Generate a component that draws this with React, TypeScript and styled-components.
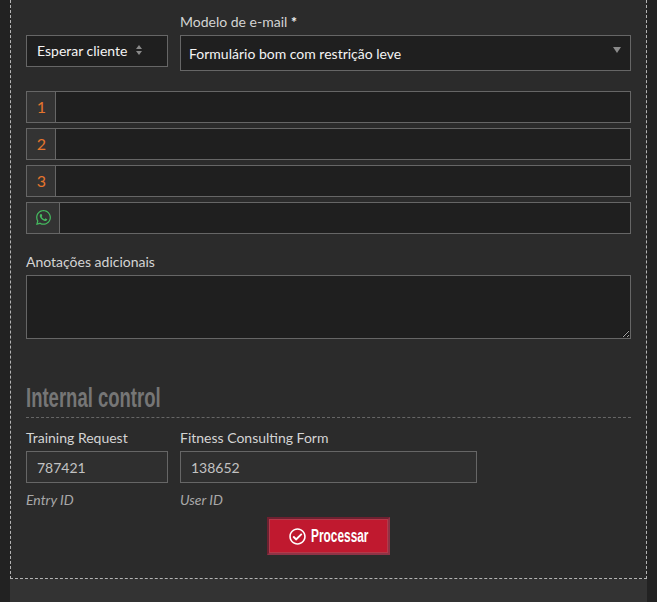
import React from "react";
import styled, { createGlobalStyle } from "styled-components";
import { FaWhatsapp, FaRegCheckCircle } from "react-icons/fa";

const Global = createGlobalStyle`
  html, body { margin: 0; padding: 0; background: #222222; height: 602px; overflow: hidden; }
  * { box-sizing: border-box; }
`;

const Page = styled.div`
  width: 657px;
  height: 602px;
  padding: 0 10px;
  background: #222222;
  font-family: Lato, "Liberation Sans", sans-serif;
  display: flex;
  flex-direction: column;
`;

const Panel = styled.main`
  height: 579px;
  background: #2b2b2b;
  border: 1px dashed #b5b5b5;
  border-top: 0;
  padding: 0 15px;
  display: flex;
  flex-direction: column;
`;

const Footer = styled.div`
  flex: 1;
  background: #333333;
`;

const TopRow = styled.div`
  display: grid;
  grid-template-columns: 142px 451px;
  column-gap: 12px;
  align-items: start;
  padding-top: 13px;
`;

const Field = styled.div`
  display: flex;
  flex-direction: column;
`;

const Label = styled.label`
  display: block;
  height: 22px;
  font-size: 14px;
  line-height: 17px;
  color: #d4d4d4;
`;

const Req = styled.b`
  color: #f0f0f0;
  font-weight: 900;
`;

const SmallSelect = styled.div`
  height: 32px;
  margin-top: 22px;
  border: 1px solid #666;
  background: #1f1f1f;
  color: #f4f4f4;
  font-size: 14px;
  padding: 0 0 2px 10px;
  display: flex;
  align-items: center;
  gap: 8px;
`;

const BigSelect = styled.div`
  position: relative;
  height: 36px;
  border: 1px solid #666;
  background: #1f1f1f;
  color: #f4f4f4;
  font-size: 14px;
  padding: 1px 8px 0;
  display: flex;
  align-items: center;
`;

const Caret = styled.svg`
  position: absolute;
  right: 9px;
  top: 11px;
`;

const Rows = styled.div`
  margin-top: 20px;
  display: flex;
  flex-direction: column;
  gap: 5px;
`;

const InputRow = styled.div`
  height: 32px;
  display: flex;
  border: 1px solid #666;
  background: #1f1f1f;
`;

const Addon = styled.span<{ $wide?: boolean; $green?: boolean }>`
  flex: none;
  width: ${(p) => (p.$wide ? "33px" : "29px")};
  background: #333333;
  border-right: 1px solid #666;
  padding: 0 0 1px 1px;
  display: flex;
  align-items: center;
  justify-content: center;
  font-size: 16px;
  color: ${(p) => (p.$green ? "#45b95f" : "#e5752d")};
`;

const RowInput = styled.input`
  flex: 1;
  min-width: 0;
  border: 0;
  background: transparent;
  outline: 0;
`;

const NotesLabel = styled(Label)`
  margin-top: 19px;
`;

const Notes = styled.textarea`
  display: block;
  width: 605px;
  height: 64px;
  margin-top: 0;
  border: 1px solid #666;
  background: #1f1f1f;
  outline: 0;
`;

const Heading = styled.h2`
  margin: 40px 0 0;
  height: 39px;
  border-bottom: 1px dashed #666;
  font-family: "Liberation Sans", sans-serif;
  font-weight: 700;
  font-size: 27px;
  line-height: 39px;
  color: #767676;
  white-space: nowrap;
`;

const Condensed = styled.span<{ $scale: number; $width: number }>`
  display: inline-block;
  width: ${(p) => p.$width}px;
  white-space: nowrap;
  transform: scaleX(${(p) => p.$scale});
  transform-origin: left center;
`;

const ControlRow = styled.div`
  margin-top: 11px;
  display: grid;
  grid-template-columns: 142px 297px;
  column-gap: 12px;
`;

const ControlInput = styled.input`
  display: block;
  width: 100%;
  height: 32px;
  border: 1px solid #666;
  background: #2f2f2f;
  color: #c2c2c2;
  font-family: Lato, "Liberation Sans", sans-serif;
  font-size: 14px;
  padding: 0 10px;
  outline: 0;
`;

const Hint = styled.em`
  display: block;
  margin-top: 8px;
  font-size: 14px;
  line-height: 17px;
  color: #a8a8a8;
`;

const Actions = styled.div`
  margin-top: 9px;
  display: flex;
  justify-content: center;
  padding-right: 1px;
`;

const Submit = styled.button`
  width: 123px;
  height: 38px;
  border: 2px solid;
  border-color: #6e2030 #8f3346 #8f3346 #6e2030;
  box-shadow: inset 0 0 0 1px #b33a4a;
  background: #c0192f;
  color: #fff;
  font-family: "Liberation Sans", sans-serif;
  font-weight: 700;
  font-size: 18px;
  display: flex;
  align-items: center;
  justify-content: center;
  gap: 5px;
  padding: 0 0 0 1px;
`;

export default function App() {
  return (
    <Page>
      <Global />
      <Panel>
        <TopRow>
          <SmallSelect>
            Esperar cliente
            <svg width="8" height="12" viewBox="0 0 8 12" aria-hidden="true">
              <path d="M4 1 7 5H1zM4 11 1 7h6z" fill="#8a8a8a" />
            </svg>
          </SmallSelect>
          <Field>
            <Label>
              Modelo de e-mail <Req>*</Req>
            </Label>
            <BigSelect>
              Formulário bom com restrição leve
              <Caret width="8" height="6" viewBox="0 0 8 6" aria-hidden="true">
                <path d="M0 0h8L4 6z" fill="#8a8a8a" />
              </Caret>
            </BigSelect>
          </Field>
        </TopRow>
        <Rows>
          <InputRow>
            <Addon>1</Addon>
            <RowInput />
          </InputRow>
          <InputRow>
            <Addon>2</Addon>
            <RowInput />
          </InputRow>
          <InputRow>
            <Addon>3</Addon>
            <RowInput />
          </InputRow>
          <InputRow>
            <Addon $wide $green>
              <FaWhatsapp size={17} />
            </Addon>
            <RowInput />
          </InputRow>
        </Rows>
        <NotesLabel>Anotações adicionais</NotesLabel>
        <Notes />
        <Heading>
          <Condensed $scale={0.685} $width={134}>Internal control</Condensed>
        </Heading>
        <ControlRow>
          <Field>
            <Label>Training Request</Label>
            <ControlInput readOnly value="787421" />
            <Hint>Entry ID</Hint>
          </Field>
          <Field>
            <Label>Fitness Consulting Form</Label>
            <ControlInput readOnly value="138652" />
            <Hint>User ID</Hint>
          </Field>
        </ControlRow>
        <Actions>
          <Submit>
            <FaRegCheckCircle size={17} />
            <Condensed $scale={0.66} $width={58}>Processar</Condensed>
          </Submit>
        </Actions>
      </Panel>
      <Footer />
    </Page>
  );
}
